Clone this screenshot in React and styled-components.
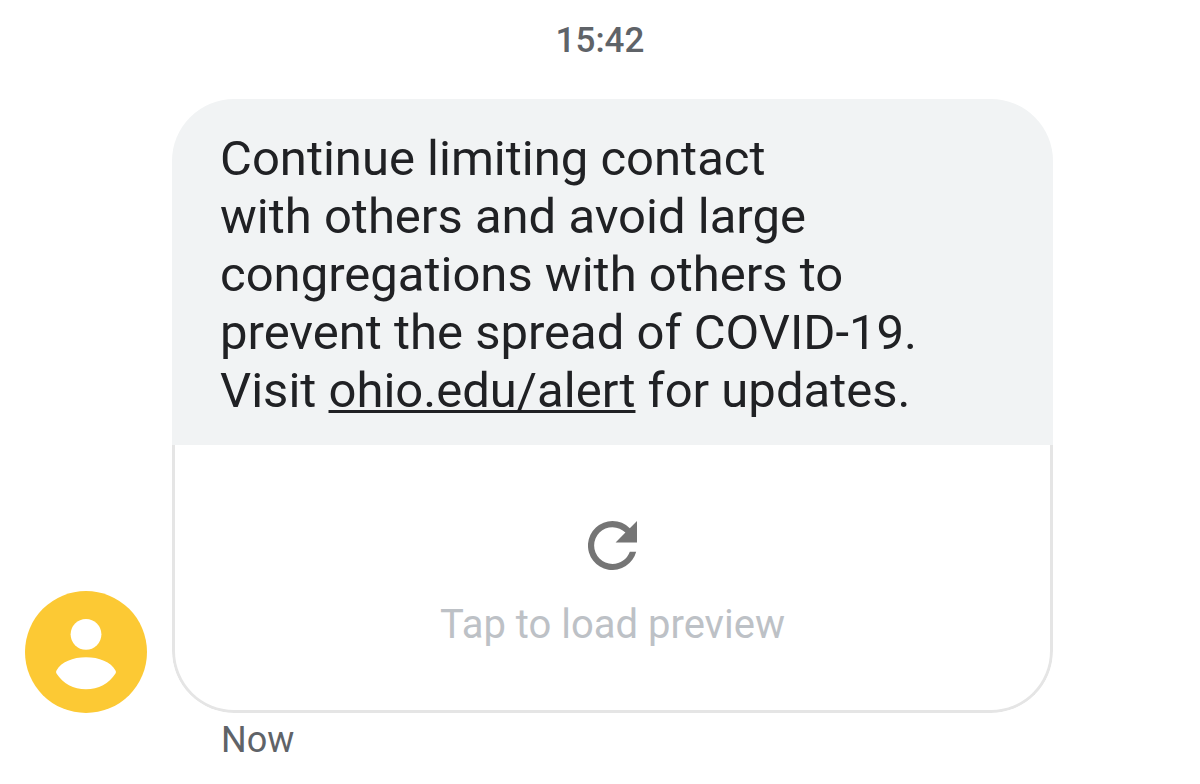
import styled, { createGlobalStyle } from 'styled-components';

const App = () => {
  return (
    <>
      <GlobalStyle />
      <Thread>
        <Time dateTime='15:42'>15:42</Time>
        <MessageRow>
          <Avatar />
          <Bubble>
            <Message>
              Continue limiting contact
              <br />
              with others and avoid large
              <br />
              congregations with others to
              <br />
              prevent the spread of COVID-19.
              <br />
              Visit <a href='#alert'>ohio.edu/alert</a> for updates.
            </Message>
            <Preview type='button'>
              <ReloadIcon />
              Tap to load preview
            </Preview>
          </Bubble>
        </MessageRow>
        <Status>Now</Status>
      </Thread>
    </>
  );
};

export default App;

const Avatar = () => (
  <AvatarSvg viewBox='0 0 122 122' role='img' aria-label='Contact'>
    <circle cx='61' cy='61' r='61' fill='#fcc934' />
    <circle cx='61' cy='43.3' r='15.4' fill='#fff' />
    <path
      d='M31.5 79.5C36 71 48 66.3 61 66.3S86 71 90.5 79.5Q91.5 81 90.5 82.5C84 92.5 73.5 98.3 61 98.3S38 92.5 31.5 82.5Q30.5 81 31.5 79.5Z'
      fill='#fff'
    />
  </AvatarSvg>
);

const ReloadIcon = () => (
  <ReloadSvg viewBox='4 4 16 16' aria-hidden='true'>
    <path
      d='M17.65 6.35A7.958 7.958 0 0 0 12 4a8 8 0 1 0 7.73 10h-2.08A5.99 5.99 0 0 1 12 18a6 6 0 1 1 0-12c1.66 0 3.14.69 4.22 1.78L13 11h7V4l-2.35 2.35z'
      fill='#757575'
    />
  </ReloadSvg>
);

const GlobalStyle = createGlobalStyle`
  * {
    box-sizing: border-box;
  }

  body {
    margin: 0;
    background-color: #fff;
    color: #202124;
    font-family: Roboto, sans-serif;
  }
`;

const Thread = styled.main`
  display: flex;
  flex-direction: column;
  padding: 20px 25px;
`;

const Time = styled.time`
  align-self: center;
  color: #5f6368;
  font-size: 35px;
  font-weight: 500;
  line-height: 42px;
`;

const MessageRow = styled.div`
  display: flex;
  align-items: flex-end;
  gap: 25px;
  margin-top: 37px;
  padding-right: 122px;
`;

const AvatarSvg = styled.svg`
  flex: none;
  width: 122px;
  height: 122px;
`;

const Bubble = styled.article`
  flex: 1;
  overflow: hidden;
  border-radius: 62px;
`;

const Message = styled.p`
  margin: 0;
  padding: 31px 48px 25px;
  background-color: #f1f3f4;
  font-size: 49px;
  line-height: 58px;

  a {
    color: inherit;
    text-decoration-thickness: 3px;
    text-underline-offset: 3px;
    text-decoration-skip-ink: none;
  }
`;

const Preview = styled.button`
  display: flex;
  flex-direction: column;
  align-items: center;
  gap: 31px;
  width: 100%;
  padding: 76px 0 61px;
  border: 3px solid #e5e5e5;
  border-top: 0;
  border-radius: 0 0 62px 62px;
  background-color: #fff;
  color: #bdc1c6;
  font-family: inherit;
  font-size: 40px;
  line-height: 48px;
  cursor: pointer;
`;

const ReloadSvg = styled.svg`
  width: 49px;
  height: 49px;
`;

const Status = styled.span`
  padding: 7px 0 0 196px;
  color: #5f6368;
  font-size: 36px;
  line-height: 40px;
`;
